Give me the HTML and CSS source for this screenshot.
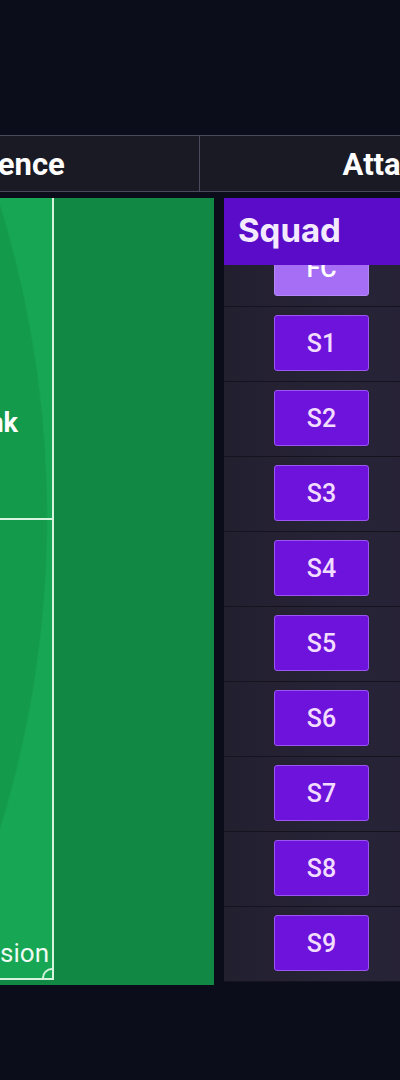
FILE: index.html
```html
<!DOCTYPE html>
<html lang="en">
<head>
<meta charset="utf-8">
<title>Squad Board</title>
<link rel="stylesheet" href="styles.css">
</head>
<body>
<div class="board">
  <div class="tabs">
    <div class="tab tab-first">Defence</div>
    <div class="tab">Attack</div>
  </div>
  <div class="content">
    <div class="pitch">
      <div class="zone">
        <div class="cell cell-top"><span class="label label-flank">Flank</span></div>
        <div class="cell cell-bottom"><span class="label label-poss">Possession</span><span class="corner"></span></div>
      </div>
      <div class="field"></div>
    </div>
    <div class="squad">
      <div class="squad-head">Squad</div>
      <div class="squad-list">
        <div class="rows">
          <div class="row"><div class="slot slot-active">FC</div></div>
          <div class="row"><div class="slot">S1</div></div>
          <div class="row"><div class="slot">S2</div></div>
          <div class="row"><div class="slot">S3</div></div>
          <div class="row"><div class="slot">S4</div></div>
          <div class="row"><div class="slot">S5</div></div>
          <div class="row"><div class="slot">S6</div></div>
          <div class="row"><div class="slot">S7</div></div>
          <div class="row"><div class="slot">S8</div></div>
          <div class="row"><div class="slot">S9</div></div>
          <div class="row"><div class="slot">S10</div></div>
        </div>
      </div>
    </div>
  </div>
</div>
</body>
</html>
```
FILE: styles.css
```css
html, body {
  margin: 0;
  padding: 0;
}
body {
  background: #0b0d1b;
  font-family: Roboto, "Liberation Sans", sans-serif;
  overflow: hidden;
  width: 400px;
  height: 1080px;
}
.board {
  margin-left: -176px;
  width: 800px;
  padding-top: 135px;
}
.tabs {
  display: flex;
  height: 55px;
  border-top: 1px solid #4a4a5c;
  border-bottom: 1px solid #4a4a5c;
  background: #1a1a25;
}
.tab {
  width: 376px;
  display: flex;
  align-items: center;
  justify-content: center;
  color: #ffffff;
  font-weight: 700;
  font-size: 31px;
  padding-top: 1px;
  box-sizing: border-box;
}
.tab-first {
  width: 376px;
  padding-right: 8px;
  border-right: 1px solid #4a4a5c;
}
.content {
  display: flex;
  gap: 10px;
  margin-top: 6px;
}
.pitch {
  width: 390px;
  height: 787px;
  background: #118843;
  display: flex;
  align-items: flex-start;
}
.zone {
  width: 228px;
  height: 780px;
  border-right: 2px solid #d6f3de;
  border-bottom: 2px solid #d6f3de;
  display: flex;
  flex-direction: column;
  background:
    radial-gradient(circle at -836px 319px, #129448 0, #139a4b 1058px, #17a653 1060px, #17a653 100%);
}
.cell {
  position: relative;
  display: flex;
  color: #ffffff;
}
.cell-top {
  height: 320px;
  border-bottom: 2px solid #d6f3de;
  justify-content: flex-end;
  align-items: flex-start;
  padding-right: 34px;
}
.cell-bottom {
  flex: 1;
  justify-content: flex-end;
  align-items: flex-end;
  padding-right: 3px;
}
.label-flank {
  font-weight: 700;
  font-size: 27px;
  margin-top: 209px;
}
.label-poss {
  font-size: 26px;
  margin-bottom: 10px;
  color: #eefaf2;
}
.corner {
  position: absolute;
  right: 0;
  bottom: 0;
  width: 8px;
  height: 8px;
  border-top: 2px solid #d6f3de;
  border-left: 2px solid #d6f3de;
  border-top-left-radius: 10px;
}
.field {
  flex: 1;
  height: 100%;
}
.squad {
  width: 300px;
  height: 784px;
  display: flex;
  flex-direction: column;
}
.squad-head {
  height: 67px;
  background: #5a0cc8;
  color: #f3eaff;
  font-family: Inter, Roboto, sans-serif;
  font-weight: 700;
  font-size: 33px;
  display: flex;
  align-items: center;
  padding-left: 14px;
  padding-bottom: 3px;
  box-sizing: border-box;
  position: relative;
  z-index: 1;
}
.squad-list {
  flex: 1;
  overflow: hidden;
  background: #1c1a27;
}
.rows {
  margin-top: -33px;
}
.row {
  height: 74px;
  border-bottom: 1px solid #15131d;
  background: linear-gradient(90deg, #221f2f 0%, #282438 40%, #241f33 100%);
  display: flex;
  align-items: flex-start;
  padding-left: 50px;
}
.slot {
  margin-top: 8px;
  width: 93px;
  height: 54px;
  border: 1px solid #9a55f2;
  border-radius: 3px;
  background: #6d13dc;
  color: #f2dcff;
  font-weight: 500;
  font-size: 25px;
  display: flex;
  align-items: center;
  justify-content: center;
}
.slot-active {
  background: #a56ef5;
  border-color: #b387f7;
  color: #ffffff;
}
```
